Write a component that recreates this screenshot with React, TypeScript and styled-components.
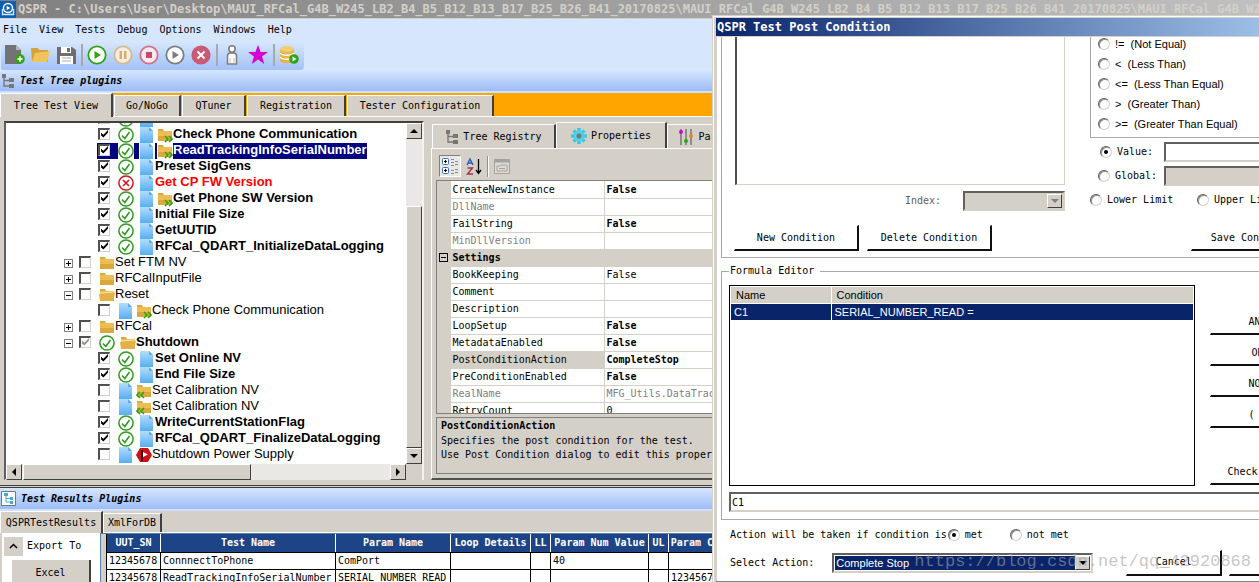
import React from "react";
import styled, { createGlobalStyle, css } from "styled-components";

const mono = `"DejaVu Sans Mono", "Liberation Mono", monospace`;
const sans = `"Liberation Sans", Arial, sans-serif`;
const face = "#d4d0c8";

const GlobalStyle = createGlobalStyle`
  *, *::before, *::after { box-sizing: border-box; }
  html, body { margin: 0; height: 100%; overflow: hidden; }
  #root { height: 100%; }
  body { font: 10px/16px ${mono}; color: #000; background: ${face}; }
  button, input, select { font: inherit; color: inherit; margin: 0; border-radius: 0; }
  button { padding: 0; border: 0; background: none; white-space: nowrap; }
  svg { display: block; flex: none; }
`;

const raised = css`
  background: ${face};
  border: 1px solid;
  border-color: #fff #404040 #404040 #fff;
`;

/* ---------- shell ---------- */
const Shell = styled.div`
  position: relative;
  display: flex;
  flex-direction: column;
  height: 100%;
  overflow: hidden;
`;
const TitleBar = styled.header`
  flex: none;
  display: flex;
  align-items: center;
  gap: 2px;
  height: 19px;
  border-bottom: 1px solid ${face};
  background: linear-gradient(90deg, #808080, #c0c0c0);
  color: ${face};
  font-size: 12px;
  font-weight: bold;
  white-space: nowrap;
  overflow: hidden;
`;
const CommandArea = styled.div`
  flex: none;
  background: #d5e6fd;
`;
const MenuBar = styled.nav`
  display: flex;
  gap: 12px;
  height: 23px;
  padding: 1px 3px 3px;
`;
const ToolBar = styled.div`
  display: inline-flex;
  align-items: center;
  vertical-align: top;
  height: 28px;
  padding: 0 2px 2px 0;
  margin-left: 1px;
  border-radius: 0 0 4px 2px;
  background: linear-gradient(#d5e6fd, #a3c1f8);
`;
const ToolButton = styled.button`
  display: flex;
  align-items: center;
  justify-content: center;
  width: 26px;
  height: 24px;
`;
const ToolDivider = styled.span`
  width: 2px;
  height: 22px;
  margin: 0 1px 0 2px;
  background: #a8a8a8;
`;
const Band = styled.h2`
  flex: none;
  display: flex;
  align-items: center;
  gap: 5px;
  height: 23px;
  margin: 0;
  padding-left: 1px;
  border-bottom: 2px solid #cfe1fd;
  background: linear-gradient(#d5e6fd, #9dbcf7);
  font-size: 10px;
  font-style: italic;
  font-weight: bold;
`;

/* ---------- tabs ---------- */
const MainTabs = styled.div`
  flex: none;
  display: flex;
  align-items: stretch;
  gap: 1px;
  height: 24px;
  background: #ffa500;
  border-bottom: 1px solid #fff;
`;
const Tab = styled.button<{ $w: number; $active?: boolean }>`
  flex: none;
  display: flex;
  align-items: center;
  justify-content: center;
  gap: 4px;
  width: ${(p) => p.$w}px;
  margin-top: ${(p) => (p.$active ? 0 : 2)}px;
  margin-bottom: ${(p) => (p.$active ? -1 : 0)}px;
  background: ${face};
  border: solid;
  border-width: 1px 2px 0 1px;
  border-color: #fff #404040 #fff #fff;
`;

/* ---------- upper workspace ---------- */
const Upper = styled.main`
  flex: none;
  display: flex;
  gap: 7px;
  height: 369px;
  padding: 4px 0 5px 4px;
  background: ${face};
  border-bottom: 1px solid #404040;
`;
const TreeFrame = styled.section`
  flex: none;
  display: grid;
  grid-template-columns: 1fr 16px;
  grid-template-rows: 1fr 16px;
  width: 420px;
  border: solid;
  border-width: 2px 2px 1px 2px;
  border-color: #404040 #f4f2ee #fff #606060;
  background: #fff;
`;
const TreeList = styled.ul`
  display: flex;
  flex-direction: column;
  justify-content: flex-end;
  margin: 0;
  padding: 0 0 1px;
  list-style: none;
  overflow: hidden;
  font: 13px/16px ${sans};
`;
const TreeItem = styled.li<{ $child?: boolean; $bold?: boolean; $red?: boolean }>`
  flex: none;
  display: flex;
  align-items: center;
  height: 16px;
  padding-left: ${(p) => (p.$child ? 91 : 58)}px;
  font-weight: ${(p) => (p.$bold ? "bold" : "normal")};
  color: ${(p) => (p.$red ? "#f00" : "#000")};
`;
const ItemBody = styled.label<{ $selected?: boolean }>`
  display: flex;
  align-items: center;
  height: 16px;
  padding-left: 1px;
  white-space: nowrap;
  background: ${(p) => (p.$selected ? "#000080" : "none")};
  color: ${(p) => (p.$selected ? "#fff" : "inherit")};
`;
const ItemText = styled.span`
  line-height: 14px;
  padding-bottom: 2px;
`;
const Expander = styled.button`
  display: flex;
  width: 9px;
  height: 9px;
  margin-right: 5px;
  border: 1px solid #808080;
  background: #fff;
`;
const Check = styled.input<{ $dim?: boolean }>`
  appearance: none;
  flex: none;
  width: 12px;
  height: 12px;
  margin: 0 8px 2px 0;
  background: #fff;
  border: solid;
  border-width: 2px 1px 1px 2px;
  border-color: #505050 ${face} ${face} #505050;
  &:checked::before {
    content: "";
    display: block;
    width: 8px;
    height: 8px;
    margin-left: 1px;
    background: ${(p) => (p.$dim ? "#909090" : "#000")};
    clip-path: polygon(0 35%, 30% 60%, 88% 0, 88% 32%, 30% 95%, 0 68%);
  }
`;
const Slot = styled.span<{ $w: number; $end?: boolean }>`
  display: flex;
  flex: none;
  justify-content: ${(p) => (p.$end ? "flex-end" : "flex-start")};
  width: ${(p) => p.$w}px;
`;

/* ---------- scroll bars ---------- */
const Scroll = styled.div<{ $vertical?: boolean }>`
  display: flex;
  flex-direction: ${(p) => (p.$vertical ? "column" : "row")};
  background: #eae8e4;
`;
const ScrollButton = styled.button`
  ${raised}
  flex: none;
  display: flex;
  align-items: center;
  justify-content: center;
  width: 16px;
  height: 16px;
`;
const Thumb = styled.div<{ $size: string; $before: number; $grow?: boolean }>`
  ${raised}
  flex: none;
  ${(p) => (p.$grow ? `margin-top:${p.$before}px; height:${p.$size};` : `margin-left:${p.$before}px; width:${p.$size}; margin-right:auto;`)}
`;
const Corner = styled.div`
  background: ${face};
`;

/* ---------- property panel ---------- */
const PropsArea = styled.section`
  flex: 1;
  min-width: 0;
  display: flex;
  flex-direction: column;
  padding-top: 1px;
`;
const PropsTabs = styled.div`
  display: flex;
  height: 26px;
  padding-left: 1px;
`;
const PropsPage = styled.div`
  flex: 1;
  display: flex;
  flex-direction: column;
  min-height: 0;
  padding: 6px 0 4px 4px;
  border-left: 1px solid #fff;
  border-top: 1px solid #fff;
  border-bottom: 2px solid #505050;
`;
const PropsTools = styled.div`
  display: flex;
  align-items: center;
  gap: 2px;
  height: 25px;
  padding: 0 3px 3px;
`;
const PropsTool = styled.button<{ $pressed?: boolean }>`
  display: flex;
  align-items: center;
  justify-content: center;
  width: 22px;
  height: 22px;
  border: 1px solid;
  border-color: ${(p) => (p.$pressed ? "#808080 #fff #fff #808080" : "transparent")};
  background: ${(p) => (p.$pressed ? "#eae8e3" : "none")};
`;
const PropsDivider = styled.span`
  width: 2px;
  height: 21px;
  background: #909090;
  border-right: 1px solid #fff;
`;
const GridFrame = styled.div`
  flex: none;
  height: 234px;
  overflow: hidden;
  border: 1px solid #808080;
  border-right: 0;
  background: ${face};
`;
const PropTable = styled.table`
  width: 100%;
  table-layout: fixed;
  border-collapse: collapse;
`;
const PropRow = styled.tr<{ $dim?: boolean; $bold?: boolean; $picked?: boolean }>`
  height: 17px;
  color: ${(p) => (p.$dim ? "#808080" : "#000")};
  td, th {
    height: 17px;
    padding: 0 0 0 2px;
    line-height: 15px;
    text-align: left;
    font-weight: normal;
    white-space: nowrap;
    border-bottom: 1px solid ${face};
    border-right: 1px solid ${face};
    background: #fff;
    overflow: hidden;
  }
  th { background: ${(p) => (p.$picked ? face : "#fff")}; }
  td:last-child { font-weight: ${(p) => (p.$bold ? "bold" : "normal")}; }
  td:first-child { background: ${face}; }
`;
const SectionRow = styled(PropRow)`
  && th, && td { background: ${face}; font-weight: bold; }
`;
const Collapse = styled(Expander)`
  margin: 0;
  border-color: #000;
  background: ${face};
`;
const Help = styled.div`
  flex: 1;
  margin-top: 3px;
  padding: 0 4px;
  border: 1px solid #808080;
  border-right: 0;
  line-height: 14px;
  white-space: nowrap;
  overflow: hidden;
  strong { display: block; line-height: 16px; }
`;

/* ---------- results ---------- */
const Lower = styled.section`
  flex: 1;
  display: flex;
  flex-direction: column;
  min-height: 0;
  border-top: 1px solid #404040;
  margin-top: 1px;
`;
const ResultTabs = styled.div`
  flex: none;
  display: flex;
  height: 22px;
  border-bottom: 1px solid #fff;
`;
const ResultBody = styled.div`
  flex: 1;
  display: flex;
  min-height: 0;
  overflow: hidden;
`;
const ExportPane = styled.div`
  flex: none;
  width: 98px;
  margin-left: 2px;
  padding: 3px 2px 2px;
  background: #fff;
`;
const ExportHead = styled.div`
  display: flex;
  align-items: center;
  gap: 4px;
  height: 20px;
`;
const Chevron = styled.button`
  display: flex;
  align-items: center;
  justify-content: center;
  width: 19px;
  height: 19px;
  background: ${face};
`;
const ExportButton = styled.button`
  width: 79px;
  height: 25px;
  margin: 4px 0 0 8px;
  background: ${face};
  border-right: 2px solid #404040;
`;
const ResultFrame = styled.div`
  flex: 1;
  padding-left: 5px;
  border-left: 1px solid #5580b0;
  border-top: 1px solid #5580b0;
  overflow: hidden;
`;
const ResultTable = styled.table`
  table-layout: fixed;
  width: 1px;
  border-collapse: collapse;
  border-left: 1px solid #000;
  th {
    height: 18px;
    padding: 0;
    background: #1c4486;
    color: #fff;
    border-right: 1px solid #fff;
    border-bottom: 1px solid #000;
    white-space: nowrap;
    line-height: 16px;
    overflow: hidden;
  }
  td {
    height: 17px;
    padding: 0 0 0 2px;
    background: #fff;
    border-right: 1px solid #000;
    border-bottom: 1px solid #000;
    white-space: nowrap;
    line-height: 16px;
  }
`;

/* ---------- dialog ---------- */
const Dialog = styled.div`
  position: absolute;
  left: 712px;
  top: 15px;
  width: 640px;
  padding: 2px 2px 0 3px;
  border: 1px solid ${face};
  box-shadow: inset 1px 1px #fff, inset 4px 4px ${face};
  background: #fff;
`;
const DialogTitle = styled.h1`
  height: 19px;
  margin: 0;
  padding-left: 1px;
  border-bottom: 1px solid ${face};
  background: linear-gradient(90deg, #0a246a, #a6caf0 92%);
  color: #fff;
  font-size: 12px;
  line-height: 18px;
`;
const DialogBody = styled.div`
  padding: 0 5px 5px;
  border-bottom: 1px solid #808080;
`;
const ConditionGroup = styled.div`
  display: grid;
  grid-template-columns: 330px 1fr;
  column-gap: 25px;
  padding: 0 0 6px 13px;
  border: 1px solid #a8a8a8;
  border-top: 0;
`;
const Col = styled.div<{ $gap: number }>`
  display: flex;
  flex-direction: column;
  gap: ${(p) => p.$gap}px;
`;
const ListBox = styled.div`
  height: 148px;
  border: solid;
  border-width: 0 1px 1px 2px;
  border-color: ${face} ${face} ${face} #505050;
`;
const IndexRow = styled.label`
  display: flex;
  align-items: center;
  justify-content: flex-end;
  gap: 22px;
  color: #606060;
`;
const SelectBox = styled.span<{ $w: number; $disabled?: boolean }>`
  position: relative;
  flex: none;
  display: flex;
  width: ${(p) => p.$w}px;
  height: 20px;
  padding: 1px;
  border: 2px solid;
  border-color: #606060 ${face} ${face} #606060;
  background: ${(p) => (p.$disabled ? face : "#fff")};
  select {
    appearance: none;
    flex: 1;
    border: 0;
    padding: 0 1px;
    outline: 0;
    opacity: 1;
    background: ${(p) => (p.$disabled ? face : "#0a246a")};
    color: #fff;
    font: 11px/14px ${sans};
  }
`;
const DropArrow = styled.span`
  ${raised}
  display: flex;
  align-items: center;
  justify-content: center;
  width: 15px;
`;
const OperatorBox = styled.div`
  display: flex;
  flex-direction: column;
  justify-content: flex-end;
  height: 101px;
  padding: 0 0 3px 7px;
  border: solid #a8a8a8;
  border-width: 0 0 1px 1px;
  overflow: hidden;
  font: 11px/20px ${sans};
`;
const Option = styled.label<{ $w?: number }>`
  flex: none;
  display: flex;
  align-items: center;
  gap: 5px;
  width: ${(p) => (p.$w ? `${p.$w}px` : "auto")};
  white-space: pre;
`;
const Radio = styled.input`
  appearance: none;
  flex: none;
  display: flex;
  align-items: center;
  justify-content: center;
  width: 12px;
  height: 12px;
  && { border-radius: 50%; }
  border: 1px solid;
  border-color: #606060 ${face} ${face} #606060;
  background: #fff;
  box-shadow: inset 1px 1px #909090;
  &:checked::before {
    content: "";
    width: 4px;
    height: 4px;
    border-radius: 50%;
    background: #000;
  }
`;
const FieldRow = styled.div<{ $indent?: number }>`
  display: flex;
  align-items: center;
  height: 20px;
  padding-left: ${(p) => p.$indent || 0}px;
`;
const TextBox = styled.input`
  flex: 1;
  min-width: 0;
  width: 100%;
  height: 20px;
  padding: 0 1px;
  border: 2px solid;
  border-color: #606060 ${face} ${face} #606060;
  background: #fff;
  &:disabled { background: ${face}; }
`;
const Push = styled.button<{ $w: number }>`
  flex: none;
  width: ${(p) => p.$w}px;
  height: 26px;
  background: #fff;
  border: solid;
  border-width: 1px 2px 2px 1px;
  border-color: #fff #101010 #101010 #fff;
`;
const ActionRow = styled.div`
  grid-column: 1 / -1;
  display: flex;
  gap: 8px;
  margin: 14px 0 0 -1px;
`;
const SavePush = styled(Push)`
  margin-left: 191px;
`;
const Formula = styled.fieldset`
  margin: 7px 0 0;
  padding: 8px 0 7px 7px;
  border: 1px solid #a8a8a8;
  min-width: 0;
`;
const Legend = styled.legend`
  padding: 0 6px 0 1px;
  line-height: 12px;
`;
const FormulaTop = styled.div`
  display: flex;
  gap: 15px;
  margin-bottom: 6px;
`;
const ConditionList = styled.div`
  flex: none;
  width: 466px;
  height: 201px;
  padding: 1px;
  border: 1px solid #000;
`;
const ConditionTable = styled.table`
  width: 100%;
  table-layout: fixed;
  border-collapse: collapse;
  font: 11px/16px ${sans};
  th, td { height: 16px; padding: 0 0 0 3px; text-align: left; font-weight: normal; }
  th { padding-left: 5px; background: ${face}; border-bottom: 1px solid #fff; }
  td { background: #0a246a; color: #fff; }
  th + th, td + td { border-left: 1px solid #fff; }
`;
const LogicCol = styled.div`
  flex: none;
  display: flex;
  flex-direction: column;
  gap: 5px;
  padding-top: 24px;
`;
const CheckPush = styled(Push)`
  margin-top: 26px;
`;
const MetRow = styled.div`
  display: flex;
  align-items: center;
  gap: 1px;
  height: 14px;
  margin: 8px 0 7px 9px;
  white-space: nowrap;
`;
const SelectRow = styled.div`
  display: flex;
  align-items: center;
  gap: 7px;
  height: 27px;
  padding-left: 9px;
  white-space: nowrap;
`;
const SelectLabel = styled.label`
  flex: none;
  display: flex;
  align-items: center;
  gap: 18px;
  margin-right: 26px;
`;
const Watermark = styled.span`
  position: absolute;
  right: 8px;
  bottom: 8px;
  color: rgba(160, 160, 160, 0.6);
  font: 17px/24px "Liberation Mono", monospace;
  pointer-events: none;
`;

/* ---------- icons ---------- */
const Folder = ({ open, arrows }: { open?: boolean; arrows?: "in" | "out" }) => (
  <svg width="16" height="16" viewBox="0 0 16 16">
    <rect width="16" height="16" fill="#fff" />
    <path d="M1 2h5l1 2h8v10H1z" fill="#d9a93c" />
    <path d="M1 4h14v5H1z" fill="#ecbd54" />
    {open && <path d="M0 7l14-2 2 1-2 8H1z" fill="#e3b148" />}
    {open && <path d="M1 6l14-1" stroke="#fbe6ad" />}
    {arrows === "out" && <path d="M8 9l3 3-3 3M12 9l3 3-3 3" fill="none" stroke="#2fa412" strokeWidth="1.6" />}
    {arrows === "in" && <path d="M4 9l-3 3 3 3M8 9l-3 3 3 3" fill="none" stroke="#2fa412" strokeWidth="1.6" />}
  </svg>
);
const Pass = () => (
  <svg width="16" height="16" viewBox="0 0 16 16">
    <rect width="16" height="16" fill="#fff" />
    <circle cx="8" cy="8" r="7.1" fill="#fff" stroke="#2c9a1c" strokeWidth="1.5" />
    <path d="M4 8.5l2.8 3L11.5 5" fill="none" stroke="#2c9a1c" strokeWidth="1.6" />
  </svg>
);
const Fail = () => (
  <svg width="16" height="16" viewBox="0 0 16 16">
    <rect width="16" height="16" fill="#fff" />
    <circle cx="8" cy="8" r="7.1" fill="#fff" stroke="#d8141e" strokeWidth="1.5" />
    <path d="M5 5l6 6M11 5l-6 6" stroke="#d8141e" strokeWidth="1.6" />
  </svg>
);
const Doc = () => (
  <svg width="16" height="16" viewBox="0 0 16 16">
    <defs>
      <linearGradient id="docFill" x1="0" y1="0" x2="0" y2="1">
        <stop offset="0" stopColor="#b4dcfd" />
        <stop offset="1" stopColor="#56aef2" />
      </linearGradient>
    </defs>
    <rect width="16" height="16" fill="#fff" />
    <path d="M1 0h9l4 4v12H1z" fill="url(#docFill)" />
    <path d="M10 0v4h4z" fill="#5ba9e6" />
  </svg>
);
const StopFlag = () => (
  <svg width="16" height="16" viewBox="0 0 16 16">
    <path d="M4 1h8l4 7-4 7H4L0 8z" fill="#cc1016" />
    <path d="M6 3v11" stroke="#000" strokeWidth="1.5" />
    <path d="M7 5l5 2.5L7 10z" fill="#fff" />
  </svg>
);
const Sign = ({ plus }: { plus?: boolean }) => (
  <svg width="7" height="7" viewBox="0 0 7 7">
    <path d={plus ? "M1 3.5h5M3.5 1v5" : "M1 3.5h5"} stroke="#000" />
  </svg>
);
const Arrow = ({ dir, dim }: { dir: "up" | "down" | "left" | "right"; dim?: boolean }) => {
  const d = { up: "M0 6L4 2l4 4z", down: "M0 2l4 4 4-4z", left: "M6 0L2 4l4 4z", right: "M2 0l4 4-4 4z" }[dir];
  return (
    <svg width="8" height="8" viewBox="0 0 8 8">
      <path d={d} fill={dim ? "#808080" : "#000"} />
    </svg>
  );
};
const TreeGlyph = () => (
  <svg width="14" height="14" viewBox="0 0 14 14">
    <path d="M3 3v9h6M3 6.5h6" fill="none" stroke="#777" strokeWidth="1.4" />
    <path d="M1 0h4v4H1zM8 4h5v4H8zM8 10h5v4H8z" fill="#777" />
  </svg>
);
const RoundGlyph = ({ color, fill = "#fff", children }: { color: string; fill?: string; children: React.ReactNode }) => (
  <svg width="20" height="20" viewBox="0 0 20 20">
    <circle cx="10" cy="10" r="8.7" fill={fill} stroke={color} strokeWidth="1.8" />
    {children}
  </svg>
);
const AppGlyph = () => (
  <svg width="16" height="17" viewBox="0 0 16 17">
    <rect width="16" height="17" fill="#0d5fb5" />
    <circle cx="8" cy="7" r="4.5" fill="none" stroke="#fff" strokeWidth="1.4" />
    <path d="M6.7 4.8L10.3 7l-3.6 2.2z" fill="#fff" />
    <path d="M2.5 8v5.5h11V8" fill="none" stroke="#cfe6ff" strokeWidth="1.4" />
  </svg>
);

const tools: (React.ReactNode | null)[] = [
  <svg width="21" height="20" viewBox="0 0 21 20"><path d="M1 0h11l5 5v14H1z" fill="#737373" /><path d="M12 0v5h5z" fill="#b5b5b5" /><circle cx="16" cy="14" r="4.8" fill="#2fa412" /><path d="M13.3 14h5.4M16 11.3v5.4" stroke="#fff" strokeWidth="1.5" /></svg>,
  <svg width="21" height="18" viewBox="0 0 21 18"><path d="M1 2h7l1 2h9v12H2z" fill="#d5a13a" /><path d="M2 16L5 7l15-2-3 11z" fill="#f0c35b" /></svg>,
  <svg width="19" height="19" viewBox="0 0 19 19"><path d="M0 1h15l4 3v14H0z" fill="#6e6e6e" /><path d="M4 1h10v6H4zM3 10h13v8H3z" fill="#fff" /><path d="M10 2h3v4h-3z" fill="#6e6e6e" /><path d="M5 12h9M5 15h9" stroke="#aaa" /></svg>,
  null,
  <RoundGlyph color="#2fa412"><path d="M7.5 6l6.5 4-6.5 4z" fill="#2fa412" /></RoundGlyph>,
  <RoundGlyph color="#d6b98a" fill="#f1ede4"><path d="M7.8 6v8M12.2 6v8" stroke="#d9ac62" strokeWidth="2.4" /></RoundGlyph>,
  <RoundGlyph color="#d0708a" fill="#f3eaf0"><path d="M7 7h6v6H7z" fill="#cc4a68" /></RoundGlyph>,
  <RoundGlyph color="#7c7c7c"><path d="M7.5 6l6.5 4-6.5 4z" fill="#7c7c7c" /></RoundGlyph>,
  <RoundGlyph color="#c95b74" fill="#c95b74"><path d="M6.5 6.5l7 7M13.5 6.5l-7 7" stroke="#fff" strokeWidth="2" /></RoundGlyph>,
  null,
  <svg width="12" height="20" viewBox="0 0 12 20"><circle cx="6" cy="4" r="3.2" fill="#fff" stroke="#7c7c7c" strokeWidth="1.5" /><path d="M1.5 19v-8q0-3 3-3h3q3 0 3 3v8z" fill="#fff" stroke="#7c7c7c" strokeWidth="1.5" /><path d="M4 13v5M8 13v5" stroke="#bbb" /></svg>,
  <svg width="20" height="20" viewBox="0 0 20 20"><path d="M10 0l2.600 7H20l-6 4.600 2.300 7.400L10 14.600 3.700 19 6 11.600 0 7h7.400z" fill="#d400d4" /></svg>,
  null,
  <svg width="20" height="20" viewBox="0 0 20 20"><path d="M1 4v12c2 3 12 3 14 0V4z" fill="#e5b44a" /><ellipse cx="8" cy="4" rx="7" ry="3" fill="#f3cb70" /><path d="M1 8c2 3 12 3 14 0M1 12c2 3 12 3 14 0" fill="none" stroke="#fff" strokeWidth="1.300" /><circle cx="15" cy="14" r="4.800" fill="#2fa412" /><path d="M13.500 11.500l4 2.500-4 2.500z" fill="#fff" /></svg>,
];
const toolNames = ["New", "Open", "Save", "", "Run", "Pause", "Stop", "Step", "Abort", "", "User", "Favourite", "", "Run database"];

/* ---------- data ---------- */
type Node = {
  text: string; child?: boolean; expand?: "+" | "-"; checked?: boolean; dim?: boolean; bold?: boolean;
  mark?: "pass" | "fail"; doc?: boolean; folder?: "closed" | "open" | "out" | "in" | "stop"; selected?: boolean;
};
const done = { child: true, checked: true, bold: true, mark: "pass" as const, doc: true };
const idle = { child: true, doc: true };
const nodes: Node[] = [
  { ...done, text: "" },
  { ...done, text: "Check Phone Communication", folder: "out" },
  { ...done, text: "ReadTrackingInfoSerialNumber", folder: "out", selected: true },
  { ...done, text: "Preset SigGens" },
  { ...done, text: "Get CP FW Version", mark: "fail" },
  { ...done, text: "Get Phone SW Version", folder: "out" },
  { ...done, text: "Initial File Size" },
  { ...done, text: "GetUUTID" },
  { ...done, text: "RFCal_QDART_InitializeDataLogging" },
  { text: "Set FTM NV", expand: "+", folder: "closed" },
  { text: "RFCalInputFile", expand: "+", folder: "closed" },
  { text: "Reset", expand: "-", folder: "open" },
  { ...idle, text: "Check Phone Communication", folder: "out" },
  { text: "RFCal", expand: "+", folder: "closed" },
  { text: "Shutdown", expand: "-", checked: true, dim: true, bold: true, mark: "pass", folder: "open" },
  { ...done, text: "Set Online NV" },
  { ...done, text: "End File Size" },
  { ...idle, text: "Set Calibration NV", folder: "in" },
  { ...idle, text: "Set Calibration NV", folder: "in" },
  { ...done, text: "WriteCurrentStationFlag" },
  { ...done, text: "RFCal_QDART_FinalizeDataLogging" },
  { ...idle, text: "Shutdown Power Supply", folder: "stop" },
];

type Prop = { name: string; value?: string; dim?: boolean; bold?: boolean; picked?: boolean; section?: boolean };
const props: Prop[] = [
  { name: "CreateNewInstance", value: "False", bold: true },
  { name: "DllName", dim: true },
  { name: "FailString", value: "False", bold: true },
  { name: "MinDllVersion", dim: true },
  { name: "Settings", section: true },
  { name: "BookKeeping", value: "False" },
  { name: "Comment" },
  { name: "Description" },
  { name: "LoopSetup", value: "False", bold: true },
  { name: "MetadataEnabled", value: "False", bold: true },
  { name: "PostConditionAction", value: "CompleteStop", bold: true, picked: true },
  { name: "PreConditionEnabled", value: "False", bold: true },
  { name: "RealName", value: "MFG_Utils.DataTracking", dim: true },
  { name: "RetryCount", value: "0" },
];

const columns: [string, number][] = [
  ["UUT_SN", 54], ["Test Name", 175], ["Param Name", 115], ["Loop Details", 80], ["LL", 20],
  ["Param Num Value", 98], ["UL", 20], ["Param Char Value", 101],
];
const results = [
  ["12345678", "ConnnectToPhone", "ComPort", "", "", "40", "", ""],
  ["12345678", "ReadTrackingInfoSerialNumber", "SERIAL_NUMBER_READ", "", "", "", "", "12345678"],
];
const operators = ["!=  (Not Equal)", "<  (Less Than)", "<=  (Less Than Equal)", ">  (Greater Than)", ">=  (Greater Than Equal)"];

const TreeRow = ({ n }: { n: Node }) => (
  <TreeItem $child={n.child} $bold={n.bold} $red={n.mark === "fail"}>
    {n.expand && <Expander aria-label="Toggle"><Sign plus={n.expand === "+"} /></Expander>}
    <ItemBody $selected={n.selected}>
      <Check type="checkbox" defaultChecked={n.checked} $dim={n.dim} aria-label={n.text || "Test"} />
      {n.mark && <Slot $w={21}>{n.mark === "pass" ? <Pass /> : <Fail />}</Slot>}
      {n.doc && <Slot $w={16}><Doc /></Slot>}
      {n.folder && (
        <Slot $w={n.child ? 18 : 16} $end>
          {n.folder === "stop" ? <StopFlag /> : (
            <Folder open={n.folder === "open"} arrows={n.folder === "in" || n.folder === "out" ? n.folder : undefined} />
          )}
        </Slot>
      )}
      <ItemText>{n.text}</ItemText>
    </ItemBody>
  </TreeItem>
);

const PostConditionDialog = () => (
  <Dialog role="dialog" aria-labelledby="dlg-title">
    <DialogTitle id="dlg-title">QSPR Test Post Condition</DialogTitle>
    <DialogBody>
      <ConditionGroup>
        <Col $gap={6}>
          <ListBox />
          <IndexRow>
            Index:
            <SelectBox $w={102} $disabled>
              <select disabled aria-label="Index" />
              <DropArrow><Arrow dir="down" dim /></DropArrow>
            </SelectBox>
          </IndexRow>
        </Col>
        <Col $gap={4}>
          <OperatorBox>
            {operators.map((o) => (
              <Option key={o}><Radio type="radio" name="operator" />{o}</Option>
            ))}
          </OperatorBox>
          <FieldRow $indent={10}>
            <Option $w={64}><Radio type="radio" name="source" defaultChecked />Value:</Option>
            <TextBox aria-label="Value" />
          </FieldRow>
          <FieldRow $indent={8}>
            <Option $w={66}><Radio type="radio" name="source" />Global:</Option>
            <TextBox aria-label="Global" disabled />
          </FieldRow>
          <FieldRow>
            <Option $w={107}><Radio type="radio" name="limit" />Lower Limit</Option>
            <Option><Radio type="radio" name="limit" />Upper Limit</Option>
          </FieldRow>
        </Col>
        <ActionRow>
          <Push $w={125}>New Condition</Push>
          <Push $w={125}>Delete Condition</Push>
          <SavePush $w={125}>Save Condition</SavePush>
        </ActionRow>
      </ConditionGroup>
      <Formula>
        <Legend>Formula Editor</Legend>
        <FormulaTop>
          <ConditionList>
            <ConditionTable>
              <colgroup><col style={{ width: 100 }} /><col /></colgroup>
              <thead><tr><th>Name</th><th>Condition</th></tr></thead>
              <tbody><tr><td>C1</td><td>SERIAL_NUMBER_READ =</td></tr></tbody>
            </ConditionTable>
          </ConditionList>
          <LogicCol>
            <Push $w={96}>AND</Push>
            <Push $w={96}>OR</Push>
            <Push $w={96}>NOT</Push>
            <Push $w={96}>( &nbsp;</Push>
            <CheckPush $w={96}>Check Form</CheckPush>
          </LogicCol>
        </FormulaTop>
        <TextBox defaultValue="C1" aria-label="Formula" />
      </Formula>
      <MetRow>
        Action will be taken if condition is
        <Option $w={61}><Radio type="radio" name="met" defaultChecked />met</Option>
        <Option><Radio type="radio" name="met" />not met</Option>
      </MetRow>
      <SelectRow>
        <SelectLabel>
          Select Action:
          <SelectBox $w={261}>
            <select><option>Complete Stop</option></select>
            <DropArrow><Arrow dir="down" /></DropArrow>
          </SelectBox>
        </SelectLabel>
        <Push $w={96}>Cancel</Push>
        <Push $w={96}>OK</Push>
      </SelectRow>
    </DialogBody>
  </Dialog>
);

export default function App() {
  return (
    <Shell>
      <GlobalStyle />
      <TitleBar>
        <AppGlyph />
        QSPR - C:\Users\User\Desktop\MAUI_RFCal_G4B_W245_LB2_B4_B5_B12_B13_B17_B25_B26_B41_20170825\MAUI_RFCal_G4B_W245_LB2_B4_B5_B12_B13_B17_B25_B26_B41_20170825\MAUI_RFCal_G4B_W245_LB2
      </TitleBar>
      <CommandArea>
        <MenuBar>
          {["File", "View", "Tests", "Debug", "Options", "Windows", "Help"].map((m) => <button key={m}>{m}</button>)}
        </MenuBar>
        <ToolBar>
          {tools.map((t, i) => t ? <ToolButton key={i} aria-label={toolNames[i]}>{t}</ToolButton> : <ToolDivider key={i} />)}
        </ToolBar>
      </CommandArea>
      <Band><TreeGlyph />Test Tree plugins</Band>
      <MainTabs>
        <Tab $w={113} $active>Tree Test View</Tab>
        <Tab $w={67}>Go/NoGo</Tab>
        <Tab $w={64}>QTuner</Tab>
        <Tab $w={99}>Registration</Tab>
        <Tab $w={147}>Tester Configuration</Tab>
      </MainTabs>
      <Upper>
        <TreeFrame>
          <TreeList>{nodes.map((n, i) => <TreeRow key={i} n={n} />)}</TreeList>
          <Scroll $vertical>
            <ScrollButton aria-label="Scroll up"><Arrow dir="up" /></ScrollButton>
            <Thumb $grow $before={67} $size="242px" />
            <ScrollButton aria-label="Scroll down"><Arrow dir="down" /></ScrollButton>
          </Scroll>
          <Scroll>
            <ScrollButton aria-label="Scroll left"><Arrow dir="left" /></ScrollButton>
            <Thumb $before={1} $size="228px" />
            <ScrollButton aria-label="Scroll right"><Arrow dir="right" /></ScrollButton>
          </Scroll>
          <Corner />
        </TreeFrame>
        <PropsArea>
          <PropsTabs>
            <Tab $w={124}><TreeGlyph />Tree Registry</Tab>
            <Tab $w={111} $active>
              <svg width="16" height="16" viewBox="0 0 16 16">
                <g stroke="#3ec6de" strokeWidth="3.500"><path d="M8 0v16M0 8h16M2.500 2.500l11 11M13.500 2.500l-11 11" /></g>
                <circle cx="8" cy="8" r="5.500" fill="#4fd0e6" /><circle cx="8" cy="8" r="2.500" fill="#777" />
              </svg>
              Properties
            </Tab>
            <Tab $w={104}>
              <svg width="16" height="16" viewBox="0 0 16 16">
                <path d="M3 0v16M8 0v16M13 0v16" stroke="#777" strokeWidth="1.500" />
                <circle cx="3" cy="3" r="2" fill="#d400d4" /><circle cx="8" cy="12" r="2" fill="#2fa412" /><circle cx="13" cy="7" r="2" fill="#e08a1c" />
              </svg>
              Parameters
            </Tab>
          </PropsTabs>
          <PropsPage>
            <PropsTools>
              <PropsTool $pressed aria-label="Categorized">
                <svg width="17" height="17" viewBox="0 0 17 17">
                  <rect x="0.500" y="0.500" width="6" height="6" rx="1" fill="#fff" stroke="#3b6cc0" /><rect x="0.500" y="9.500" width="6" height="6" rx="1" fill="#fff" stroke="#3b6cc0" />
                  <path d="M2 3.500h3M3.500 2v3M2 12.500h3M3.500 11v3" stroke="#000" />
                  <path d="M9 1.500h3M9 4.500h3M9 7.500h3M9 12.500h3M9 15.500h3" stroke="#6f8fc0" /><path d="M13 3.500h3M13 6.500h3M13 11.500h3M13 14.500h3" stroke="#888" />
                </svg>
              </PropsTool>
              <PropsTool aria-label="Alphabetical">
                <svg width="17" height="17" viewBox="0 0 17 17">
                  <path d="M1 7l3-6 3 6M2 5h4" fill="none" stroke="#2a5db8" strokeWidth="1.400" />
                  <path d="M1.500 10h5l-5 6h5.500" fill="none" stroke="#a8324a" strokeWidth="1.400" />
                  <path d="M12.500 1v14M10 12l2.500 3.500L15 12" fill="none" stroke="#000" strokeWidth="1.300" />
                </svg>
              </PropsTool>
              <PropsDivider />
              <PropsTool aria-label="Property pages">
                <svg width="16" height="15" viewBox="0 0 16 15">
                  <path d="M0.500 0.500h15v14H.5z" fill="#dedbd5" stroke="#a5a29c" /><path d="M0 2h16" stroke="#a5a29c" strokeWidth="3" />
                  <path d="M3 12V7h3l1-1h6v6zM5 9.500h6" fill="none" stroke="#a5a29c" />
                </svg>
              </PropsTool>
            </PropsTools>
            <GridFrame>
              <PropTable>
                <colgroup><col style={{ width: 13 }} /><col style={{ width: 154 }} /><col /></colgroup>
                <tbody>
                  {props.map((p) => p.section ? (
                    <SectionRow key={p.name}>
                      <td><Collapse aria-label="Collapse"><Sign /></Collapse></td>
                      <th colSpan={2}>{p.name}</th>
                    </SectionRow>
                  ) : (
                    <PropRow key={p.name} $dim={p.dim} $bold={p.bold} $picked={p.picked}>
                      <td /><th scope="row">{p.name}</th><td>{p.value}</td>
                    </PropRow>
                  ))}
                </tbody>
              </PropTable>
            </GridFrame>
            <Help>
              <strong>PostConditionAction</strong>
              Specifies the post condition for the test.<br />
              Use Post Condition dialog to edit this property.
            </Help>
          </PropsPage>
        </PropsArea>
      </Upper>
      <Lower>
        <Band>
          <svg width="15" height="15" viewBox="0 0 15 15">
            <path d="M.5.5h14v14H.5z" fill="#fff" stroke="#777" />
            <path d="M5 4v7h4M5 7.500h4" fill="none" stroke="#4aa8d8" /><path d="M3 2h4v3H3zM9 6h3v3H9zM9 10h3v3H9z" fill="#4aa8d8" />
          </svg>
          Test Results Plugins
        </Band>
        <ResultTabs>
          <Tab $w={103} $active>QSPRTestResults</Tab>
          <Tab $w={59}>XmlForDB</Tab>
        </ResultTabs>
        <ResultBody>
          <ExportPane>
            <ExportHead>
              <Chevron aria-label="Collapse">
                <svg width="9" height="6" viewBox="0 0 9 6"><path d="M1 5l3.500-3.500L8 5" fill="none" stroke="#000" strokeWidth="1.500" /></svg>
              </Chevron>
              Export To
            </ExportHead>
            <ExportButton>Excel</ExportButton>
          </ExportPane>
          <ResultFrame>
            <ResultTable>
              <colgroup>{columns.map(([c, w]) => <col key={c} style={{ width: w }} />)}</colgroup>
              <thead><tr>{columns.map(([c]) => <th key={c}>{c}</th>)}</tr></thead>
              <tbody>{results.map((r, i) => <tr key={i}>{r.map((c, j) => <td key={j}>{c}</td>)}</tr>)}</tbody>
            </ResultTable>
          </ResultFrame>
        </ResultBody>
      </Lower>
      <PostConditionDialog />
      <Watermark>https://blog.csdn.net/qq_42920868</Watermark>
    </Shell>
  );
}
